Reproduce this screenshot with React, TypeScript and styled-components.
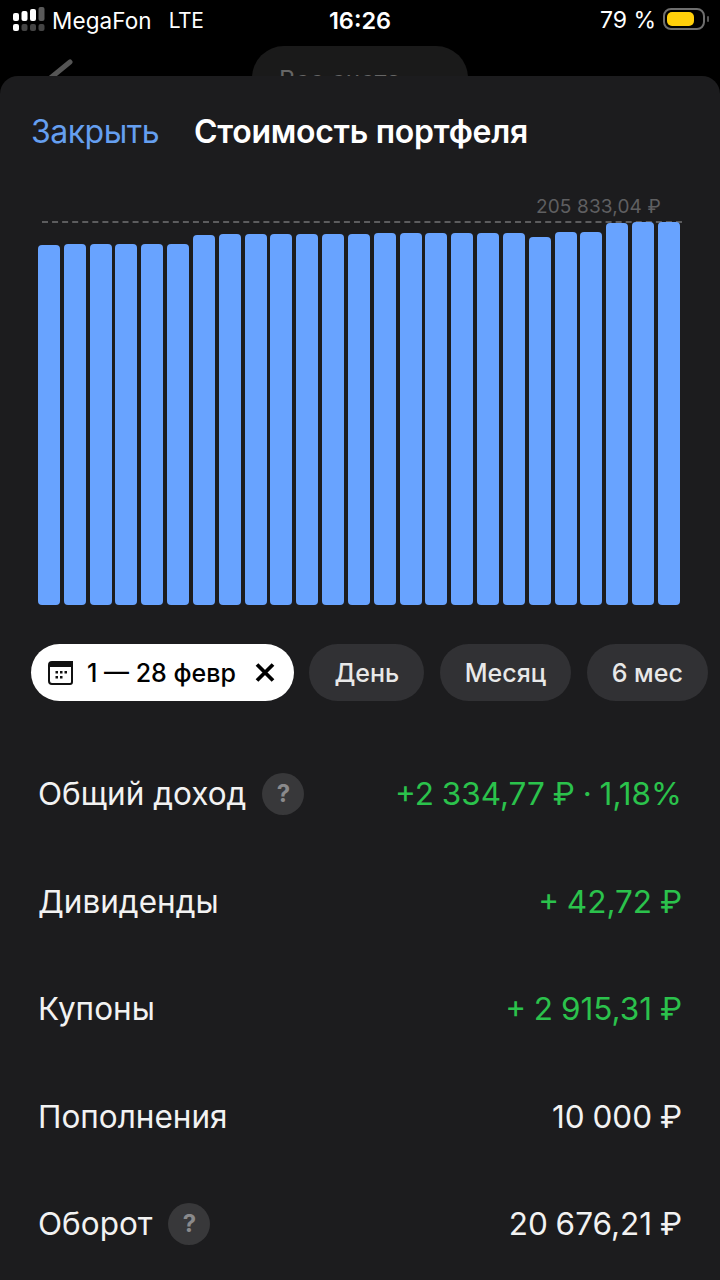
import React from 'react';
import styled, { createGlobalStyle } from 'styled-components';

const GlobalStyle = createGlobalStyle`
    html, body {
        margin: 0;
        padding: 0;
        background: #000;
    }
    body {
        font-family: Inter, "Noto Sans", sans-serif;
    }
`;

const Screen = styled.div`
    position: relative;
    width: 720px;
    height: 1280px;
    overflow: hidden;
    background: #000;
    color: #fff;
`;

const StatusBar = styled.div`
    display: grid;
    grid-template-columns: 1fr auto 1fr;
    align-items: center;
    height: 40px;
    padding: 0 10px 0 12px;
`;

const StatusLeft = styled.div`
    display: flex;
    align-items: center;
    gap: 7px;
`;

const Carrier = styled.span`
    font-size: 22.5px;
    letter-spacing: 0.1px;
    margin-right: 10px;
`;

const Network = styled.span`
    font-size: 21px;
    letter-spacing: -0.5px;
`;

const Clock = styled.div`
    font-weight: 600;
    font-size: 23.5px;
    margin-left: -2px;
`;

const StatusRight = styled.div`
    display: flex;
    justify-content: flex-end;
    align-items: center;
    gap: 7px;
    font-size: 23px;
`;

const BatteryWrap = styled.svg`
    margin-top: -3px;
`;

const Backdrop = styled.div`
    height: 36px;
    display: flex;
    justify-content: center;
    overflow: hidden;
`;

const BackChevron = styled.svg`
    position: absolute;
    left: 40px;
    top: 52px;
`;

const AccountsPill = styled.div`
    width: 216px;
    height: 70px;
    margin-top: 6px;
    border-radius: 32px;
    background: #1a1a1a;
    color: #666;
    font-size: 25px;
    padding: 19px 0 0 27px;
    box-sizing: border-box;
`;

const Sheet = styled.div`
    position: relative;
    height: 1204px;
    box-sizing: border-box;
    background: #1c1c1e;
    border-radius: 18px 18px 0 0;
    padding-top: 36px;
`;

const Header = styled.div`
    display: flex;
    align-items: center;
    gap: 35px;
    padding-left: 31px;
    height: 38px;
`;

const CloseLink = styled.span`
    color: #659ff0;
    font-size: 32px;
    letter-spacing: -0.5px;
`;

const Title = styled.span`
    font-size: 32px;
    font-weight: 600;
    letter-spacing: -0.25px;
`;

const ChartArea = styled.div`
    position: relative;
    height: 384px;
    margin: 71px 40px 0 38px;
    display: flex;
    align-items: flex-end;
    justify-content: space-between;
`;

const MaxLine = styled.div`
    position: absolute;
    left: 4px;
    right: -2px;
    top: 0;
    border-top: 2px dashed #5c5c5e;
`;

const MaxLabel = styled.div`
    position: absolute;
    right: 19px;
    top: -26px;
    color: #5f5f61;
    font-size: 19px;
    letter-spacing: 0.15px;
`;

const Bar = styled.div`
    position: relative;
    width: 22px;
    background: #68a3ff;
    border-radius: 4px;
`;

const Chips = styled.div`
    display: flex;
    align-items: center;
    gap: 15.5px;
    padding-left: 31px;
    margin-top: 39px;
`;

const Chip = styled.div<{ $active?: boolean }>`
    display: flex;
    align-items: center;
    flex-shrink: 0;
    height: 57px;
    border-radius: 29px;
    box-sizing: border-box;
    padding: 0 25px;
    font-size: 25px;
    font-weight: 500;
    background: ${(p) => (p.$active ? '#fff' : '#313134')};
    color: ${(p) => (p.$active ? '#000' : '#e8e8e8')};
`;

const ActiveChip = styled(Chip)`
    padding: 0 18px 0 17px;
    gap: 14px;
`;

const ChipDate = styled.span`
    margin-right: 4px;
`;

const Rows = styled.div`
    margin-top: 39px;
    padding: 0 38px;
`;

const Row = styled.div`
    display: flex;
    align-items: center;
    justify-content: space-between;
    height: 107.5px;
`;

const RowLabel = styled.div`
    display: flex;
    align-items: center;
    gap: 16px;
    font-size: 31.5px;
    color: #f2f2f2;
`;

const RowValue = styled.div<{ $positive?: boolean }>`
    font-size: 31.5px;
    word-spacing: -1px;
    color: ${(p) => (p.$positive ? '#2bc24c' : '#f2f2f2')};
`;

const HintBadge = styled.span`
    display: flex;
    align-items: center;
    justify-content: center;
    width: 42px;
    height: 42px;
    border-radius: 50%;
    background: #38383a;
    color: #8a8a8c;
    font-size: 24px;
    font-weight: 700;
`;

const BAR_TOPS = [
    245, 244, 244, 244, 244, 244, 235, 234, 234, 234, 234, 234, 234, 233, 233, 233, 233, 233,
    233, 237, 232, 232, 223, 222, 222,
];

const CHART_BOTTOM = 605;

const ROWS = [
    { label: 'Общий доход', value: '+2 334,77 ₽ · 1,18%', positive: true, hint: true },
    { label: 'Дивиденды', value: '+ 42,72 ₽', positive: true },
    { label: 'Купоны', value: '+ 2 915,31 ₽', positive: true },
    { label: 'Пополнения', value: '10 000 ₽' },
    { label: 'Оборот', value: '20 676,21 ₽', hint: true },
];

const SignalIcon = () => (
    <svg width="33" height="28" viewBox="0 0 33 28">
        <g fill="#fff">
            <rect x="1" y="7" width="6" height="8" rx="2" />
            <rect x="9.500" y="5" width="6" height="10" rx="2" />
            <rect x="18" y="3" width="6" height="12" rx="2" />
            <rect x="1" y="18" width="6" height="7" rx="2" />
        </g>
        <rect x="26.500" y="1" width="6" height="14" rx="2" fill="#5a5a5a" />
        <g fill="#444">
            <rect x="9.500" y="18" width="6" height="7" rx="2" />
            <rect x="18" y="18" width="6" height="7" rx="2" />
            <rect x="26.500" y="18" width="6" height="7" rx="2" />
        </g>
    </svg>
);

const BatteryIcon = () => (
    <BatteryWrap width="47" height="22" viewBox="0 0 47 22">
        <rect x="1" y="1" width="40" height="20" rx="7" fill="none" stroke="#6e6e6e" strokeWidth="2" />
        <rect x="4" y="4" width="27" height="14" rx="5" fill="#ffcf0a" />
        <rect x="44" y="8" width="2" height="6" rx="1" fill="#555" />
    </BatteryWrap>
);

const CalendarIcon = () => (
    <svg width="25" height="24" viewBox="0 0 25 24">
        <path d="M4 1h20v20a2 2 0 0 1-2 2H4a3 3 0 0 1-3-3V4a3 3 0 0 1 3-3z" fill="none" stroke="#111" strokeWidth="2" />
        <path d="M4 1h20v5H1V4a3 3 0 0 1 3-3z" fill="#111" />
        <g fill="#111">
            <rect x="7.500" y="10" width="2.500" height="2.500" />
            <rect x="12" y="10" width="2.500" height="2.500" />
            <rect x="16.500" y="10" width="2.500" height="2.500" />
            <rect x="7.500" y="15" width="2.500" height="2.500" />
            <rect x="12" y="15" width="2.500" height="2.500" />
        </g>
    </svg>
);

const CrossIcon = () => (
    <svg width="22" height="22" viewBox="0 0 22 22">
        <path d="M3 2.500l16 16M19 2.500l-16 16" stroke="#000" strokeWidth="3.800" fill="none" />
    </svg>
);

const App: React.FC = () => {
    return (
        <Screen>
            <GlobalStyle />
            <StatusBar>
                <StatusLeft>
                    <SignalIcon />
                    <Carrier>MegaFon</Carrier>
                    <Network>LTE</Network>
                </StatusLeft>
                <Clock>16:26</Clock>
                <StatusRight>
                    <span>79 %</span>
                    <BatteryIcon />
                </StatusRight>
            </StatusBar>
            <Backdrop>
                <BackChevron width="36" height="30" viewBox="0 0 36 30">
                    <path d="M30 10L8 28" stroke="#555" strokeWidth="5" strokeLinecap="round" fill="none" />
                </BackChevron>
                <AccountsPill>Все счета</AccountsPill>
            </Backdrop>
            <Sheet>
                <Header>
                    <CloseLink>Закрыть</CloseLink>
                    <Title>Стоимость портфеля</Title>
                </Header>
                <ChartArea>
                    <MaxLine />
                    <MaxLabel>205 833,04 ₽</MaxLabel>
                    {BAR_TOPS.map((top, i) => (
                        <Bar key={i} style={{ height: CHART_BOTTOM - top }} />
                    ))}
                </ChartArea>
                <Chips>
                    <ActiveChip $active>
                        <CalendarIcon />
                        <ChipDate>1 — 28 февр</ChipDate>
                        <CrossIcon />
                    </ActiveChip>
                    <Chip>День</Chip>
                    <Chip>Месяц</Chip>
                    <Chip>6 мес</Chip>
                </Chips>
                <Rows>
                    {ROWS.map((row) => (
                        <Row key={row.label}>
                            <RowLabel>
                                {row.label}
                                {row.hint && <HintBadge>?</HintBadge>}
                            </RowLabel>
                            <RowValue $positive={row.positive}>{row.value}</RowValue>
                        </Row>
                    ))}
                </Rows>
            </Sheet>
        </Screen>
    );
};

export default App;
